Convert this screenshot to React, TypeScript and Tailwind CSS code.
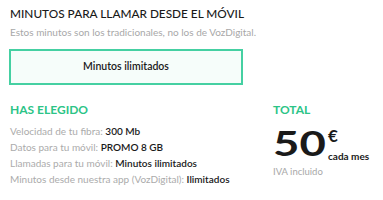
const chosen = [
  { label: "Velocidad de tu fibra:", value: "300 Mb" },
  { label: "Datos para tu móvil:", value: "PROMO 8 GB" },
  { label: "Llamadas para tu móvil:", value: "Minutos ilimitados" },
  { label: "Minutos desde nuestra app (VozDigital):", value: "Ilimitados" },
];

export default function App() {
  return (
    <div className="h-[200px] w-[383px] bg-white font-['Lato',sans-serif] text-[#1a1a1a]">
      <div className="px-[10px] pt-[6px]">
        <h2 className="text-[11.8px] leading-[15px] font-medium">MINUTOS PARA LLAMAR DESDE EL MÓVIL</h2>
        <p className="mt-[5px] text-[10px] leading-[12px] text-[#a8a8a8]">
          Estos minutos son los tradicionales, no los de VozDigital.
        </p>
        <div className="mt-[11px] ml-[-1px] flex h-[36px] w-[234px] items-center justify-center border-2 border-[#45d0a2] bg-[#f6fdfa]">
          <span className="text-[10.5px] font-semibold">Minutos ilimitados</span>
        </div>
      </div>

      <div className="mt-[18px] flex px-[10px]">
        <div className="flex-1">
          <p className="text-[12px] leading-[14px] font-bold text-[#2cc487]">HAS ELEGIDO</p>
          <div className="mt-[8px] flex flex-col gap-[3px]">
            {chosen.map((row) => (
              <p key={row.label} className="text-[10px] leading-[13px] text-[#ababab]">
                {row.label} <span className="font-semibold text-[#1a1a1a]">{row.value}</span>
              </p>
            ))}
          </div>
        </div>
        <div className="w-[100px]">
          <p className="text-[12px] leading-[14px] font-bold text-[#2cc487]">TOTAL</p>
          <div className="mt-[8px] flex items-start">
            <div className="w-[55px]">
              <span className="inline-block origin-left scale-x-[1.3] text-[35px] leading-[34px] font-bold">50</span>
            </div>
            <div className="flex flex-col">
              <span className="mt-[3px] text-[17px] leading-[16px] font-bold">€</span>
              <span className="mt-[7px] text-[10px] leading-[11px] font-bold">cada mes</span>
            </div>
          </div>
          <p className="mt-[4px] text-[9.5px] leading-[11px] text-[#a8a8a8]">IVA incluido</p>
        </div>
      </div>
    </div>
  );
}
